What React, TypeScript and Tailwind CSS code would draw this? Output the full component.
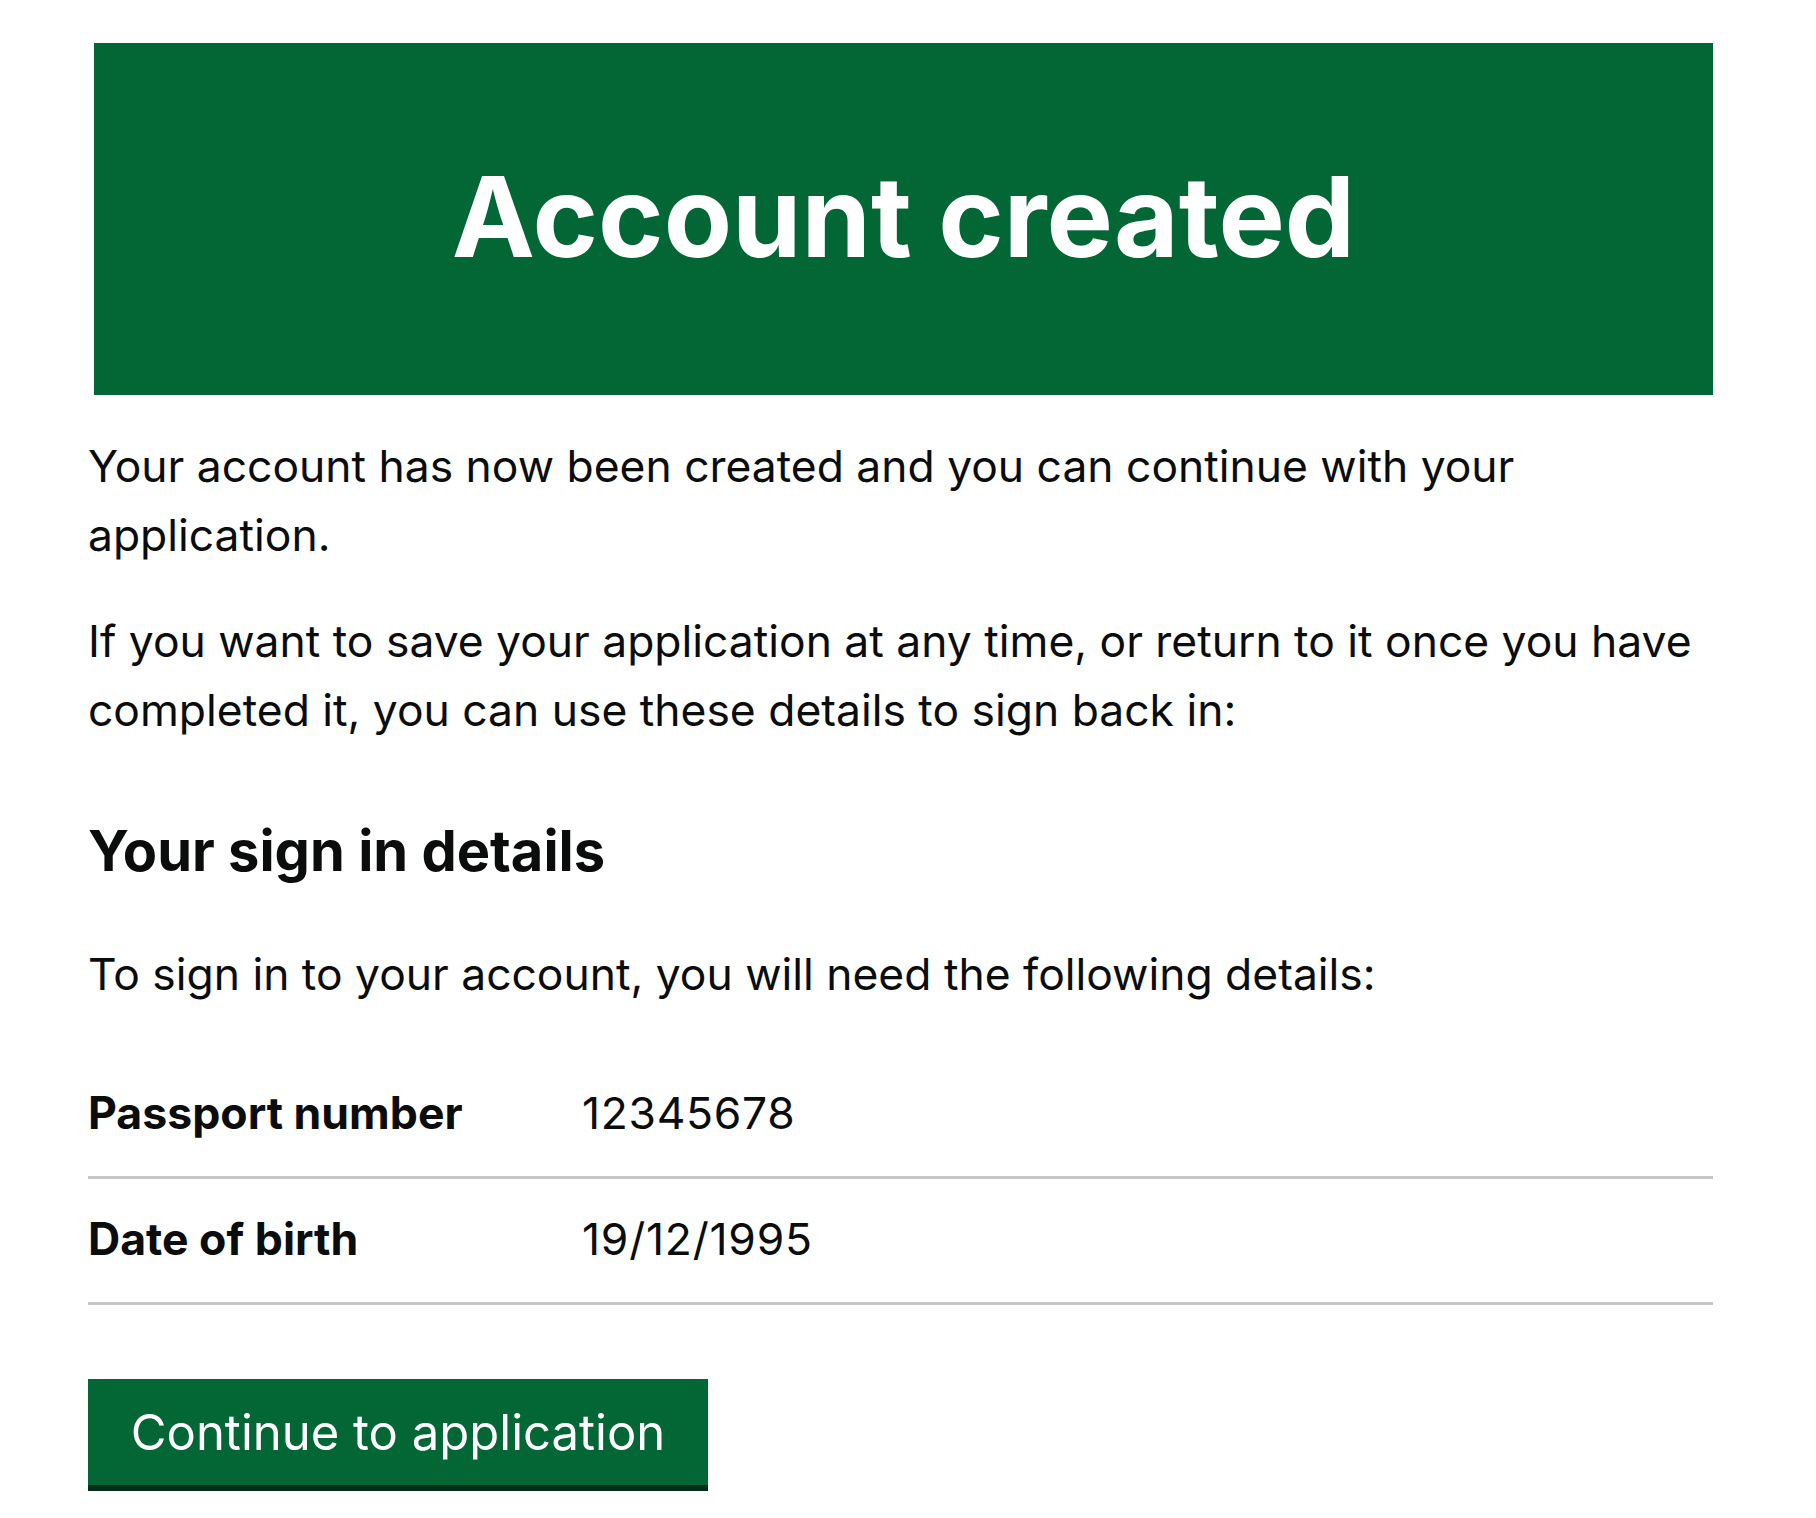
import React from "react";

export default function App() {
  return (
    <div
      className="min-h-screen bg-white pl-[88px] pt-[43px] text-[#0b0c0c]"
      style={{ fontFamily: "Inter, 'Noto Sans', Arial, sans-serif" }}
    >
      <div className="w-[1625px]">
        <div className="ml-[6px] flex h-[352px] items-center justify-center bg-[#036635] pb-[5px]">
          <h1 className="text-[111.5px] font-bold leading-none text-white">Account created</h1>
        </div>

        <p className="mt-[37px] text-[44.4px] leading-[69px]">
          Your account has now been created and you can continue with your application.
        </p>
        <p className="mt-[37px] text-[44.4px] leading-[69px]">
          If you want to save your application at any time, or return to it once you have completed it, you can use
          these details to sign back in:
        </p>

        <h2 className="mt-[71px] text-[56px] font-bold leading-[71px]">Your sign in details</h2>

        <p className="mt-[53px] text-[44.4px] leading-[69px]">
          To sign in to your account, you will need the following details:
        </p>

        <dl className="mt-[44px]">
          <div className="flex border-b-[3px] border-[#c6c6c6] pt-[26px] pb-[28px]">
            <dt className="w-[494px] shrink-0 text-[44.6px] font-bold leading-[69px]">Passport number</dt>
            <dd className="text-[44.4px] leading-[69px] tracking-[0.7px]">12345678</dd>
          </div>
          <div className="flex border-b-[3px] border-[#c6c6c6] pt-[26px] pb-[28px]">
            <dt className="w-[494px] shrink-0 text-[44.6px] font-bold leading-[69px]">Date of birth</dt>
            <dd className="text-[44.4px] leading-[69px] tracking-[0.8px]">19/12/1995</dd>
          </div>
        </dl>

        <button
          type="button"
          className="mt-[74px] flex h-[112px] w-[620px] items-center justify-center border-b-[6px] border-[#002d18] bg-[#036635] text-[49px] leading-none text-white"
        >
          Continue to application
        </button>
      </div>
    </div>
  );
}
